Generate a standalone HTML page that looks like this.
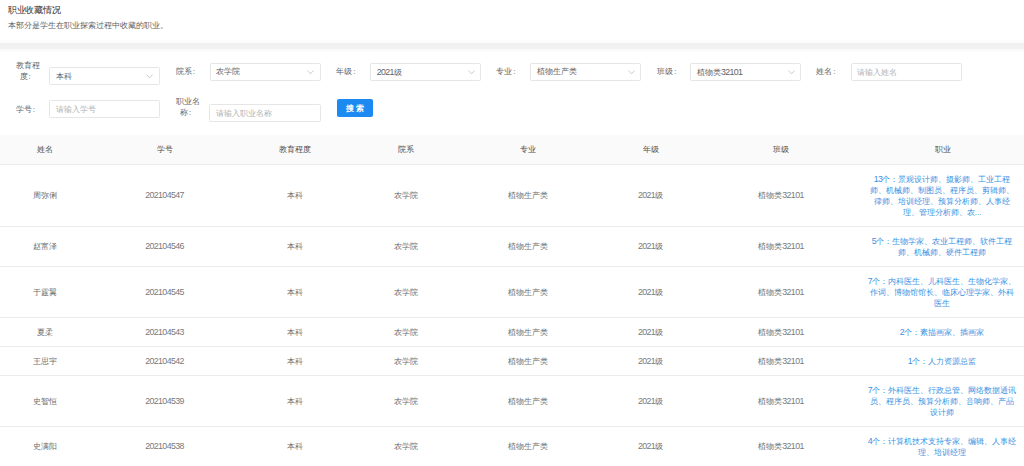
<!DOCTYPE html>
<html><head><meta charset="utf-8">
<style>
*{margin:0;padding:0;box-sizing:border-box}
html,body{width:1024px;height:466px;overflow:hidden;background:#fff}
body{position:relative;font-family:"Liberation Sans",sans-serif;color:#606266}
.a{position:absolute;white-space:nowrap}
.title{left:8px;top:3.5px;font-size:8.6px;letter-spacing:-0.3px;line-height:12px;font-weight:normal;color:#383838;-webkit-text-stroke:0.05px #383838}
.desc{left:7.5px;top:20px;font-size:8px;line-height:12px;color:#5e5e5e}
.band{position:absolute;left:0;top:40px;width:1024px;height:12px;background:linear-gradient(to bottom,#fdfdfd 0,#fbfbfb 2.6px,#f0f0f0 2.6px,#f2f2f2 9px,#f9f9f9 9px,#fdfdfd 12px)}
.lbl{position:absolute;font-size:8px;line-height:11px;text-align:center;color:#606266;white-space:nowrap}
.co{display:inline-block;width:8px;font-style:normal;text-align:left;padding-left:1px}
.ctl{position:absolute;width:111px;border:1px solid #e6e6e6;border-radius:1.5px;background:#fff;font-size:8px;line-height:16.5px;padding-left:5.5px;color:#606266;white-space:nowrap}
.ph{color:#b2b2b2;position:relative;top:0.8px}
.n{font-size:8.8px;letter-spacing:-0.6px}
.td .n{color:#7a7a7a}
.chev{position:absolute;right:5.6px;top:50%;margin-top:-2px;width:7px;height:4.5px}
.btn{position:absolute;left:337.2px;top:99px;width:36.3px;height:17.7px;background:#1d8af1;border-radius:2px;color:#fff;font-size:8px;line-height:17.1px;padding-top:0.6px;text-align:center;font-weight:bold}
.thead{position:absolute;left:0;top:135px;width:1024px;height:30px;background:#fafafa;border-bottom:1px solid #ebebeb}
.row{position:absolute;left:0;width:1024px;border-bottom:1px solid #ebebeb}
.c{position:absolute;top:0;height:100%;display:flex;align-items:center;justify-content:center;font-size:8px;line-height:11px;text-align:center;white-space:nowrap}
.th{color:#4c4c4c}
.td{color:#6e6e6e}
.job{left:870px;width:144px;white-space:nowrap;color:#3890e3}
</style></head>
<body>
<div class="a title">职业收藏情况</div>
<div class="a desc">本部分是学生在职业探索过程中收藏的职业。</div>
<div class="band"></div>

<!-- form row 1 -->
<div class="lbl" style="left:15.5px;top:60px;width:24px">教育程<br>度<i class="co">:</i></div>
<div class="ctl" style="left:49px;top:67px;height:17.5px;line-height:18.3px">本科<svg class="chev" viewBox="0 0 7 4.5"><path d="M0.5 0.5 L3.5 3.8 L6.5 0.5" fill="none" stroke="#c4c4c4" stroke-width="0.9"/></svg></div>
<div class="lbl" style="left:175.7px;top:66.1px;width:24px">院系<i class="co">:</i></div>
<div class="ctl" style="left:209.6px;top:63.3px;height:17.5px">农学院<svg class="chev" viewBox="0 0 7 4.5"><path d="M0.5 0.5 L3.5 3.8 L6.5 0.5" fill="none" stroke="#c4c4c4" stroke-width="0.9"/></svg></div>
<div class="lbl" style="left:336.3px;top:66.1px;width:24px">年级<i class="co">:</i></div>
<div class="ctl" style="left:370.2px;top:63.3px;height:17.5px"><span class="n">2021</span>级<svg class="chev" viewBox="0 0 7 4.5"><path d="M0.5 0.5 L3.5 3.8 L6.5 0.5" fill="none" stroke="#c4c4c4" stroke-width="0.9"/></svg></div>
<div class="lbl" style="left:496.3px;top:66.1px;width:24px">专业<i class="co">:</i></div>
<div class="ctl" style="left:530.2px;top:63.3px;height:17.5px">植物生产类<svg class="chev" viewBox="0 0 7 4.5"><path d="M0.5 0.5 L3.5 3.8 L6.5 0.5" fill="none" stroke="#c4c4c4" stroke-width="0.9"/></svg></div>
<div class="lbl" style="left:657.3px;top:66.1px;width:24px">班级<i class="co">:</i></div>
<div class="ctl" style="left:690.4px;top:63.3px;height:17.5px">植物类<span class="n">32101</span><svg class="chev" viewBox="0 0 7 4.5"><path d="M0.5 0.5 L3.5 3.8 L6.5 0.5" fill="none" stroke="#c4c4c4" stroke-width="0.9"/></svg></div>
<div class="lbl" style="left:816.3px;top:66.1px;width:24px">姓名<i class="co">:</i></div>
<div class="ctl" style="left:850.5px;top:63.3px;height:17.5px"><span class="ph">请输入姓名</span></div>
<!-- form row 2 -->
<div class="lbl" style="left:15.8px;top:103.5px;width:24px">学号<i class="co">:</i></div>
<div class="ctl" style="left:49.2px;top:100.2px;height:18px;line-height:15px"><span class="ph">请输入学号</span></div>
<div class="lbl" style="left:176px;top:96px;width:24px">职业名<br>称<i class="co">:</i></div>
<div class="ctl" style="left:209.4px;top:104px;height:17.5px;width:111.8px"><span class="ph">请输入职业名称</span></div>
<div class="btn">搜 索</div>

<!-- table header -->
<div class="thead">
  <div class="c th" style="left:0;width:89px">姓名</div>
  <div class="c th" style="left:89px;width:151px">学号</div>
  <div class="c th" style="left:240px;width:109px">教育程度</div>
  <div class="c th" style="left:349px;width:114px">院系</div>
  <div class="c th" style="left:463px;width:129px">专业</div>
  <div class="c th" style="left:592px;width:117px">年级</div>
  <div class="c th" style="left:709px;width:144px">班级</div>
  <div class="c th" style="left:870.5px;width:144px">职业</div>
</div>

<div id="rows">
<div class="row" style="top:165px;height:62px"><div class="c td" style="left:0px;width:89px"><div>周弥俐</div></div><div class="c td" style="left:89px;width:151px"><div><span class="n">202104547</span></div></div><div class="c td" style="left:240px;width:109px"><div>本科</div></div><div class="c td" style="left:349px;width:114px"><div>农学院</div></div><div class="c td" style="left:463px;width:129px"><div>植物生产类</div></div><div class="c td" style="left:592px;width:117px"><div><span class="n">2021</span>级</div></div><div class="c td" style="left:709px;width:144px"><div>植物类<span class="n">32101</span></div></div><div class="c job"><div><span class="n">13</span>个：景观设计师、摄影师、工业工程<br>师、机械师、制图员、程序员、剪辑师、<br>律师、培训经理、预算分析师、人事经<br>理、管理分析师、农...</div></div></div>
<div class="row" style="top:227px;height:40px"><div class="c td" style="left:0px;width:89px"><div>赵富泽</div></div><div class="c td" style="left:89px;width:151px"><div><span class="n">202104546</span></div></div><div class="c td" style="left:240px;width:109px"><div>本科</div></div><div class="c td" style="left:349px;width:114px"><div>农学院</div></div><div class="c td" style="left:463px;width:129px"><div>植物生产类</div></div><div class="c td" style="left:592px;width:117px"><div><span class="n">2021</span>级</div></div><div class="c td" style="left:709px;width:144px"><div>植物类<span class="n">32101</span></div></div><div class="c job"><div><span class="n">5</span>个：生物学家、农业工程师、软件工程<br>师、机械师、硬件工程师</div></div></div>
<div class="row" style="top:267px;height:51px"><div class="c td" style="left:0px;width:89px"><div>于霆翼</div></div><div class="c td" style="left:89px;width:151px"><div><span class="n">202104545</span></div></div><div class="c td" style="left:240px;width:109px"><div>本科</div></div><div class="c td" style="left:349px;width:114px"><div>农学院</div></div><div class="c td" style="left:463px;width:129px"><div>植物生产类</div></div><div class="c td" style="left:592px;width:117px"><div><span class="n">2021</span>级</div></div><div class="c td" style="left:709px;width:144px"><div>植物类<span class="n">32101</span></div></div><div class="c job"><div><span class="n">7</span>个：内科医生、儿科医生、生物化学家、<br>作词、博物馆馆长、临床心理学家、外科<br>医生</div></div></div>
<div class="row" style="top:318px;height:29px"><div class="c td" style="left:0px;width:89px"><div>夏柔</div></div><div class="c td" style="left:89px;width:151px"><div><span class="n">202104543</span></div></div><div class="c td" style="left:240px;width:109px"><div>本科</div></div><div class="c td" style="left:349px;width:114px"><div>农学院</div></div><div class="c td" style="left:463px;width:129px"><div>植物生产类</div></div><div class="c td" style="left:592px;width:117px"><div><span class="n">2021</span>级</div></div><div class="c td" style="left:709px;width:144px"><div>植物类<span class="n">32101</span></div></div><div class="c job"><div><span class="n">2</span>个：素描画家、插画家</div></div></div>
<div class="row" style="top:347px;height:29px"><div class="c td" style="left:0px;width:89px"><div>王思宇</div></div><div class="c td" style="left:89px;width:151px"><div><span class="n">202104542</span></div></div><div class="c td" style="left:240px;width:109px"><div>本科</div></div><div class="c td" style="left:349px;width:114px"><div>农学院</div></div><div class="c td" style="left:463px;width:129px"><div>植物生产类</div></div><div class="c td" style="left:592px;width:117px"><div><span class="n">2021</span>级</div></div><div class="c td" style="left:709px;width:144px"><div>植物类<span class="n">32101</span></div></div><div class="c job"><div><span class="n">1</span>个：人力资源总监</div></div></div>
<div class="row" style="top:376px;height:51px"><div class="c td" style="left:0px;width:89px"><div>史智恒</div></div><div class="c td" style="left:89px;width:151px"><div><span class="n">202104539</span></div></div><div class="c td" style="left:240px;width:109px"><div>本科</div></div><div class="c td" style="left:349px;width:114px"><div>农学院</div></div><div class="c td" style="left:463px;width:129px"><div>植物生产类</div></div><div class="c td" style="left:592px;width:117px"><div><span class="n">2021</span>级</div></div><div class="c td" style="left:709px;width:144px"><div>植物类<span class="n">32101</span></div></div><div class="c job"><div><span class="n">7</span>个：外科医生、行政总管、网络数据通讯<br>员、程序员、预算分析师、音响师、产品<br>设计师</div></div></div>
<div class="row" style="top:427px;height:40px"><div class="c td" style="left:0px;width:89px"><div>史满阳</div></div><div class="c td" style="left:89px;width:151px"><div><span class="n">202104538</span></div></div><div class="c td" style="left:240px;width:109px"><div>本科</div></div><div class="c td" style="left:349px;width:114px"><div>农学院</div></div><div class="c td" style="left:463px;width:129px"><div>植物生产类</div></div><div class="c td" style="left:592px;width:117px"><div><span class="n">2021</span>级</div></div><div class="c td" style="left:709px;width:144px"><div>植物类<span class="n">32101</span></div></div><div class="c job"><div><span class="n">4</span>个：计算机技术支持专家、编辑、人事经<br>理、培训经理</div></div></div>
</div>
</body></html>
